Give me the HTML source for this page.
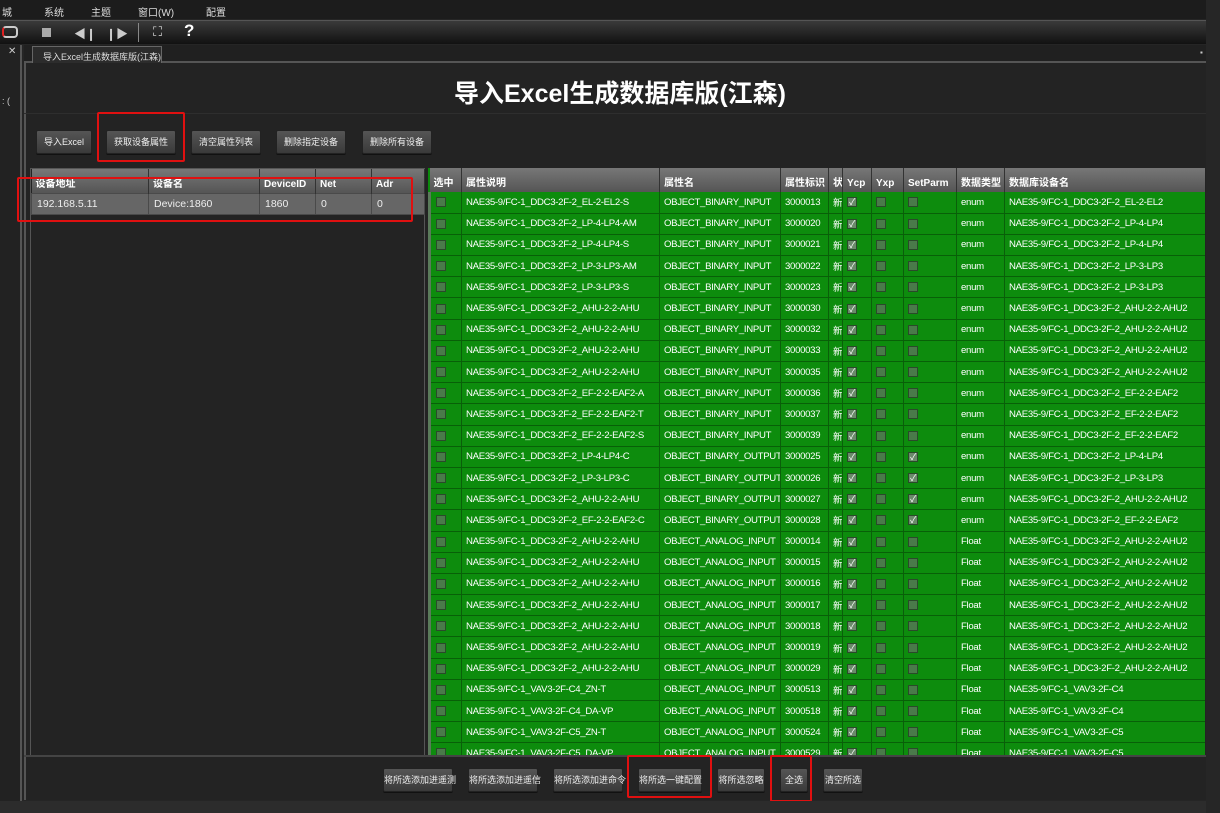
<!DOCTYPE html>
<html><head><meta charset="utf-8">
<style>
*{margin:0;padding:0;box-sizing:border-box}
body{width:1220px;height:813px;background:#252525;font-family:"Liberation Sans","Noto Sans CJK SC",sans-serif;color:#ddd;position:relative;overflow:hidden}
.abs{position:absolute}
.menu{left:0;top:0;width:1220px;height:19px;background:#1c1c1c;font-size:10px;color:#ddd}
.menu span{position:absolute;top:4px}
.tool{left:0;top:20px;width:1210px;height:24px;background:linear-gradient(#3a3a3a,#111);border-top:1px solid #555}
.tabbar{left:24px;top:45px;width:1182px;height:18px;background:#202020;border-bottom:2px solid #555}
.tab{left:32px;top:46px;width:130px;height:17px;background:#2c2c2c;border:1px solid #666;border-bottom:none;font-size:9px;color:#ddd;padding:3px 0 0 10px;white-space:nowrap}
.main{left:24px;top:63px;width:1182px;height:737px;background:#232323;border-left:2px solid #555}
.title{left:0;top:74px;width:1240px;text-align:center;font-size:25px;font-weight:bold;color:#fff}
.btn{height:24px;background:linear-gradient(#555,#3a3a3a);border:1px solid #222;border-radius:2px;font-size:9px;color:#eee;text-align:center;line-height:22px;box-shadow:0 1px 0 #111;white-space:nowrap}
.red{border:2px solid #e01010;border-radius:2px}
.lgrid{left:30px;top:168px;width:395px;height:588px;background:#232323;border:1px solid #555}
table{border-collapse:collapse;table-layout:fixed}
th{background:linear-gradient(#777,#555);color:#fff;font-size:10px;font-weight:bold;text-align:left;padding-left:4px;height:24px;border-right:1px solid #333;white-space:nowrap;overflow:hidden;vertical-align:bottom;padding-bottom:3px}
.lgrid td{background:#666;color:#eee;font-size:10.5px;padding-left:5px;height:21px;border:1px solid #4a4a4a}
.rgrid{left:428px;top:168px;width:777px;height:588px;background:#0c8a0c;overflow:hidden}
.rgrid td{background:#0d8c0d;color:#fff;font-size:9.6px;letter-spacing:-0.3px;padding-left:4px;height:21.2px;border-right:1px solid #0a5f0a;border-bottom:1px solid #086008;white-space:nowrap;overflow:hidden}
.cb{display:inline-block;width:10px;height:10px;background:#4a7a4a;border:1px solid #2a4a2a;vertical-align:middle}
.ck{display:inline-block;width:10px;height:10px;background:#6a8a6a;border:1px solid #2a4a2a;vertical-align:middle;font-size:9px;line-height:8px;color:#fff;text-align:center}
.rgrid td.c0{padding-left:5px;border-left:3px solid #5a7a5a}
</style></head><body>
<div class="abs menu"><span style="left:2px">城</span><span style="left:44px">系统</span><span style="left:91px">主题</span><span style="left:138px">窗口(W)</span><span style="left:206px">配置</span></div>
<div class="abs tool">
<div class="abs" style="left:2px;top:5px;width:16px;height:12px;border:2px solid #ccc;border-left:2px solid #e02020;border-radius:4px"></div>
<div class="abs" style="left:42px;top:7px;width:9px;height:9px;background:#aaa"></div>
<div class="abs" style="left:74px;top:4px;font-size:12px;color:#ccc">◀❙</div>
<div class="abs" style="left:106px;top:4px;font-size:12px;color:#ccc">❙▶</div>
<div class="abs" style="left:138px;top:2px;width:1px;height:19px;background:#888"></div>
<div class="abs" style="left:153px;top:3px;font-size:13px;color:#ddd">⛶</div>
<div class="abs" style="left:184px;top:0px;font-size:17px;font-weight:bold;color:#fff">?</div>
</div>
<div class="abs" style="left:0;top:45px;width:22px;height:760px;background:#222;border-right:2px solid #555"></div>
<div class="abs" style="left:8px;top:46px;font-size:10px;color:#ccc">✕</div>
<div class="abs" style="left:2px;top:96px;font-size:9px;color:#ccc">: (</div>
<div class="abs tabbar"></div>
<div class="abs tab">导入Excel生成数据库版(江森)</div>
<div class="abs" style="left:1200px;top:48px;font-size:8px;color:#ccc">▪</div>
<div class="abs main"></div>
<div class="abs" style="left:24px;top:113px;width:1182px;height:1px;background:#2e2e2e"></div>
<div class="abs title">导入Excel生成数据库版(江森)</div>

<div class="abs btn" style="left:36px;top:130px;width:56px">导入Excel</div>
<div class="abs btn" style="left:106px;top:130px;width:70px">获取设备属性</div>
<div class="abs btn" style="left:191px;top:130px;width:70px">清空属性列表</div>
<div class="abs btn" style="left:276px;top:130px;width:70px">删除指定设备</div>
<div class="abs btn" style="left:362px;top:130px;width:70px">删除所有设备</div>
<div class="abs red" style="left:97px;top:112px;width:88px;height:50px"></div>

<div class="abs lgrid">
<table style="width:393px">
<colgroup><col style="width:117px"><col style="width:111px"><col style="width:56px"><col style="width:56px"><col style="width:53px"></colgroup>
<tr><th>设备地址</th><th>设备名</th><th>DeviceID</th><th>Net</th><th>Adr</th></tr>
<tr><td>192.168.5.11</td><td>Device:1860</td><td>1860</td><td>0</td><td>0</td></tr>
</table>
</div>
<div class="abs red" style="left:17px;top:177px;width:396px;height:45px"></div>

<div class="abs rgrid">
<table style="width:777px">
<colgroup><col style="width:32px"><col style="width:198px"><col style="width:121px"><col style="width:48px"><col style="width:14px"><col style="width:29px"><col style="width:32px"><col style="width:53px"><col style="width:48px"><col style="width:202px"></colgroup>
<tr><th>选中</th><th>属性说明</th><th>属性名</th><th>属性标识</th><th>状</th><th>Ycp</th><th>Yxp</th><th>SetParm</th><th>数据类型</th><th>数据库设备名</th></tr>
<tr><td class="c0"><span class="cb"></span></td><td>NAE35-9/FC-1_DDC3-2F-2_EL-2-EL2-S</td><td>OBJECT_BINARY_INPUT</td><td>3000013</td><td>新</td><td><span class="ck">✓</span></td><td><span class="cb"></span></td><td><span class="cb"></span></td><td>enum</td><td>NAE35-9/FC-1_DDC3-2F-2_EL-2-EL2</td></tr>
<tr><td class="c0"><span class="cb"></span></td><td>NAE35-9/FC-1_DDC3-2F-2_LP-4-LP4-AM</td><td>OBJECT_BINARY_INPUT</td><td>3000020</td><td>新</td><td><span class="ck">✓</span></td><td><span class="cb"></span></td><td><span class="cb"></span></td><td>enum</td><td>NAE35-9/FC-1_DDC3-2F-2_LP-4-LP4</td></tr>
<tr><td class="c0"><span class="cb"></span></td><td>NAE35-9/FC-1_DDC3-2F-2_LP-4-LP4-S</td><td>OBJECT_BINARY_INPUT</td><td>3000021</td><td>新</td><td><span class="ck">✓</span></td><td><span class="cb"></span></td><td><span class="cb"></span></td><td>enum</td><td>NAE35-9/FC-1_DDC3-2F-2_LP-4-LP4</td></tr>
<tr><td class="c0"><span class="cb"></span></td><td>NAE35-9/FC-1_DDC3-2F-2_LP-3-LP3-AM</td><td>OBJECT_BINARY_INPUT</td><td>3000022</td><td>新</td><td><span class="ck">✓</span></td><td><span class="cb"></span></td><td><span class="cb"></span></td><td>enum</td><td>NAE35-9/FC-1_DDC3-2F-2_LP-3-LP3</td></tr>
<tr><td class="c0"><span class="cb"></span></td><td>NAE35-9/FC-1_DDC3-2F-2_LP-3-LP3-S</td><td>OBJECT_BINARY_INPUT</td><td>3000023</td><td>新</td><td><span class="ck">✓</span></td><td><span class="cb"></span></td><td><span class="cb"></span></td><td>enum</td><td>NAE35-9/FC-1_DDC3-2F-2_LP-3-LP3</td></tr>
<tr><td class="c0"><span class="cb"></span></td><td>NAE35-9/FC-1_DDC3-2F-2_AHU-2-2-AHU</td><td>OBJECT_BINARY_INPUT</td><td>3000030</td><td>新</td><td><span class="ck">✓</span></td><td><span class="cb"></span></td><td><span class="cb"></span></td><td>enum</td><td>NAE35-9/FC-1_DDC3-2F-2_AHU-2-2-AHU2</td></tr>
<tr><td class="c0"><span class="cb"></span></td><td>NAE35-9/FC-1_DDC3-2F-2_AHU-2-2-AHU</td><td>OBJECT_BINARY_INPUT</td><td>3000032</td><td>新</td><td><span class="ck">✓</span></td><td><span class="cb"></span></td><td><span class="cb"></span></td><td>enum</td><td>NAE35-9/FC-1_DDC3-2F-2_AHU-2-2-AHU2</td></tr>
<tr><td class="c0"><span class="cb"></span></td><td>NAE35-9/FC-1_DDC3-2F-2_AHU-2-2-AHU</td><td>OBJECT_BINARY_INPUT</td><td>3000033</td><td>新</td><td><span class="ck">✓</span></td><td><span class="cb"></span></td><td><span class="cb"></span></td><td>enum</td><td>NAE35-9/FC-1_DDC3-2F-2_AHU-2-2-AHU2</td></tr>
<tr><td class="c0"><span class="cb"></span></td><td>NAE35-9/FC-1_DDC3-2F-2_AHU-2-2-AHU</td><td>OBJECT_BINARY_INPUT</td><td>3000035</td><td>新</td><td><span class="ck">✓</span></td><td><span class="cb"></span></td><td><span class="cb"></span></td><td>enum</td><td>NAE35-9/FC-1_DDC3-2F-2_AHU-2-2-AHU2</td></tr>
<tr><td class="c0"><span class="cb"></span></td><td>NAE35-9/FC-1_DDC3-2F-2_EF-2-2-EAF2-A</td><td>OBJECT_BINARY_INPUT</td><td>3000036</td><td>新</td><td><span class="ck">✓</span></td><td><span class="cb"></span></td><td><span class="cb"></span></td><td>enum</td><td>NAE35-9/FC-1_DDC3-2F-2_EF-2-2-EAF2</td></tr>
<tr><td class="c0"><span class="cb"></span></td><td>NAE35-9/FC-1_DDC3-2F-2_EF-2-2-EAF2-T</td><td>OBJECT_BINARY_INPUT</td><td>3000037</td><td>新</td><td><span class="ck">✓</span></td><td><span class="cb"></span></td><td><span class="cb"></span></td><td>enum</td><td>NAE35-9/FC-1_DDC3-2F-2_EF-2-2-EAF2</td></tr>
<tr><td class="c0"><span class="cb"></span></td><td>NAE35-9/FC-1_DDC3-2F-2_EF-2-2-EAF2-S</td><td>OBJECT_BINARY_INPUT</td><td>3000039</td><td>新</td><td><span class="ck">✓</span></td><td><span class="cb"></span></td><td><span class="cb"></span></td><td>enum</td><td>NAE35-9/FC-1_DDC3-2F-2_EF-2-2-EAF2</td></tr>
<tr><td class="c0"><span class="cb"></span></td><td>NAE35-9/FC-1_DDC3-2F-2_LP-4-LP4-C</td><td>OBJECT_BINARY_OUTPUT</td><td>3000025</td><td>新</td><td><span class="ck">✓</span></td><td><span class="cb"></span></td><td><span class="ck">✓</span></td><td>enum</td><td>NAE35-9/FC-1_DDC3-2F-2_LP-4-LP4</td></tr>
<tr><td class="c0"><span class="cb"></span></td><td>NAE35-9/FC-1_DDC3-2F-2_LP-3-LP3-C</td><td>OBJECT_BINARY_OUTPUT</td><td>3000026</td><td>新</td><td><span class="ck">✓</span></td><td><span class="cb"></span></td><td><span class="ck">✓</span></td><td>enum</td><td>NAE35-9/FC-1_DDC3-2F-2_LP-3-LP3</td></tr>
<tr><td class="c0"><span class="cb"></span></td><td>NAE35-9/FC-1_DDC3-2F-2_AHU-2-2-AHU</td><td>OBJECT_BINARY_OUTPUT</td><td>3000027</td><td>新</td><td><span class="ck">✓</span></td><td><span class="cb"></span></td><td><span class="ck">✓</span></td><td>enum</td><td>NAE35-9/FC-1_DDC3-2F-2_AHU-2-2-AHU2</td></tr>
<tr><td class="c0"><span class="cb"></span></td><td>NAE35-9/FC-1_DDC3-2F-2_EF-2-2-EAF2-C</td><td>OBJECT_BINARY_OUTPUT</td><td>3000028</td><td>新</td><td><span class="ck">✓</span></td><td><span class="cb"></span></td><td><span class="ck">✓</span></td><td>enum</td><td>NAE35-9/FC-1_DDC3-2F-2_EF-2-2-EAF2</td></tr>
<tr><td class="c0"><span class="cb"></span></td><td>NAE35-9/FC-1_DDC3-2F-2_AHU-2-2-AHU</td><td>OBJECT_ANALOG_INPUT</td><td>3000014</td><td>新</td><td><span class="ck">✓</span></td><td><span class="cb"></span></td><td><span class="cb"></span></td><td>Float</td><td>NAE35-9/FC-1_DDC3-2F-2_AHU-2-2-AHU2</td></tr>
<tr><td class="c0"><span class="cb"></span></td><td>NAE35-9/FC-1_DDC3-2F-2_AHU-2-2-AHU</td><td>OBJECT_ANALOG_INPUT</td><td>3000015</td><td>新</td><td><span class="ck">✓</span></td><td><span class="cb"></span></td><td><span class="cb"></span></td><td>Float</td><td>NAE35-9/FC-1_DDC3-2F-2_AHU-2-2-AHU2</td></tr>
<tr><td class="c0"><span class="cb"></span></td><td>NAE35-9/FC-1_DDC3-2F-2_AHU-2-2-AHU</td><td>OBJECT_ANALOG_INPUT</td><td>3000016</td><td>新</td><td><span class="ck">✓</span></td><td><span class="cb"></span></td><td><span class="cb"></span></td><td>Float</td><td>NAE35-9/FC-1_DDC3-2F-2_AHU-2-2-AHU2</td></tr>
<tr><td class="c0"><span class="cb"></span></td><td>NAE35-9/FC-1_DDC3-2F-2_AHU-2-2-AHU</td><td>OBJECT_ANALOG_INPUT</td><td>3000017</td><td>新</td><td><span class="ck">✓</span></td><td><span class="cb"></span></td><td><span class="cb"></span></td><td>Float</td><td>NAE35-9/FC-1_DDC3-2F-2_AHU-2-2-AHU2</td></tr>
<tr><td class="c0"><span class="cb"></span></td><td>NAE35-9/FC-1_DDC3-2F-2_AHU-2-2-AHU</td><td>OBJECT_ANALOG_INPUT</td><td>3000018</td><td>新</td><td><span class="ck">✓</span></td><td><span class="cb"></span></td><td><span class="cb"></span></td><td>Float</td><td>NAE35-9/FC-1_DDC3-2F-2_AHU-2-2-AHU2</td></tr>
<tr><td class="c0"><span class="cb"></span></td><td>NAE35-9/FC-1_DDC3-2F-2_AHU-2-2-AHU</td><td>OBJECT_ANALOG_INPUT</td><td>3000019</td><td>新</td><td><span class="ck">✓</span></td><td><span class="cb"></span></td><td><span class="cb"></span></td><td>Float</td><td>NAE35-9/FC-1_DDC3-2F-2_AHU-2-2-AHU2</td></tr>
<tr><td class="c0"><span class="cb"></span></td><td>NAE35-9/FC-1_DDC3-2F-2_AHU-2-2-AHU</td><td>OBJECT_ANALOG_INPUT</td><td>3000029</td><td>新</td><td><span class="ck">✓</span></td><td><span class="cb"></span></td><td><span class="cb"></span></td><td>Float</td><td>NAE35-9/FC-1_DDC3-2F-2_AHU-2-2-AHU2</td></tr>
<tr><td class="c0"><span class="cb"></span></td><td>NAE35-9/FC-1_VAV3-2F-C4_ZN-T</td><td>OBJECT_ANALOG_INPUT</td><td>3000513</td><td>新</td><td><span class="ck">✓</span></td><td><span class="cb"></span></td><td><span class="cb"></span></td><td>Float</td><td>NAE35-9/FC-1_VAV3-2F-C4</td></tr>
<tr><td class="c0"><span class="cb"></span></td><td>NAE35-9/FC-1_VAV3-2F-C4_DA-VP</td><td>OBJECT_ANALOG_INPUT</td><td>3000518</td><td>新</td><td><span class="ck">✓</span></td><td><span class="cb"></span></td><td><span class="cb"></span></td><td>Float</td><td>NAE35-9/FC-1_VAV3-2F-C4</td></tr>
<tr><td class="c0"><span class="cb"></span></td><td>NAE35-9/FC-1_VAV3-2F-C5_ZN-T</td><td>OBJECT_ANALOG_INPUT</td><td>3000524</td><td>新</td><td><span class="ck">✓</span></td><td><span class="cb"></span></td><td><span class="cb"></span></td><td>Float</td><td>NAE35-9/FC-1_VAV3-2F-C5</td></tr>
<tr><td class="c0"><span class="cb"></span></td><td>NAE35-9/FC-1_VAV3-2F-C5_DA-VP</td><td>OBJECT_ANALOG_INPUT</td><td>3000529</td><td>新</td><td><span class="ck">✓</span></td><td><span class="cb"></span></td><td><span class="cb"></span></td><td>Float</td><td>NAE35-9/FC-1_VAV3-2F-C5</td></tr>
</table>
</div>
<div class="abs" style="left:24px;top:755px;width:1182px;height:2px;background:#444"></div>

<div class="abs btn" style="left:383px;top:768px;width:70px">将所选添加进遥测</div>
<div class="abs btn" style="left:468px;top:768px;width:70px">将所选添加进遥信</div>
<div class="abs btn" style="left:553px;top:768px;width:70px">将所选添加进命令</div>
<div class="abs btn" style="left:638px;top:768px;width:64px">将所选一键配置</div>
<div class="abs btn" style="left:717px;top:768px;width:48px">将所选忽略</div>
<div class="abs btn" style="left:780px;top:768px;width:28px">全选</div>
<div class="abs btn" style="left:823px;top:768px;width:40px">清空所选</div>
<div class="abs red" style="left:627px;top:755px;width:85px;height:43px"></div>
<div class="abs red" style="left:770px;top:755px;width:42px;height:47px"></div>
<div class="abs" style="left:0;top:801px;width:1220px;height:12px;background:#2c2c2c"></div>
<div class="abs" style="left:1206px;top:0;width:14px;height:813px;background:#262626"></div>
</body></html>
